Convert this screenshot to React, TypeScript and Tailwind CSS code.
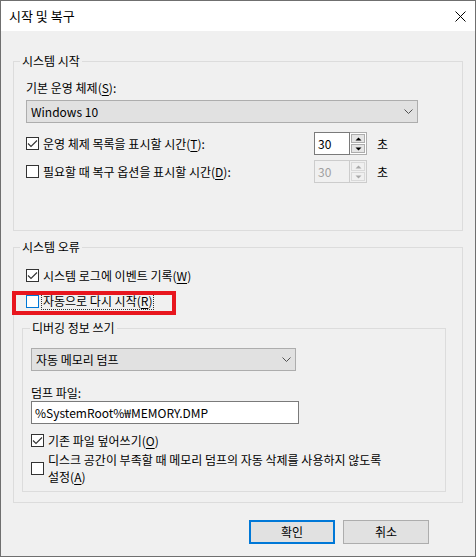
import React from "react";

// Windows 10 "시작 및 복구" dialog

function Mn({ k }: { k: string }) {
  return (
    <>
      (<span className="underline underline-offset-2">{k}</span>)
    </>
  );
}

function CheckBox({ checked, focus }: { checked?: boolean; focus?: boolean }) {
  return (
    <span
      className={
        focus
          ? "flex h-[13px] w-[13px] shrink-0 items-center justify-center border border-[#0078d7] bg-white"
          : "flex h-[13px] w-[13px] shrink-0 items-center justify-center border border-[#333333] bg-white"
      }
    >
      {checked && (
        <svg width="11" height="11" viewBox="0 0 11 11">
          <path d="M1 5.5 L4 8.5 L10 2.5" stroke="#333333" strokeWidth="1.1" fill="none" />
        </svg>
      )}
    </span>
  );
}

function Arrow({ up, color }: { up?: boolean; color: string }) {
  return (
    <svg width="7" height="4" viewBox="0 0 7 4">
      <path d={up ? "M0.5 3.5 L3.5 0.5 L6.5 3.5 Z" : "M0.5 0.5 L3.5 3.5 L6.5 0.5 Z"} fill={color} />
    </svg>
  );
}

function SpinBox({ disabled }: { disabled?: boolean }) {
  const arrow = disabled ? "#a8a8a8" : "#000000";
  return (
    <div className="flex h-[23px]">
      <div
        className={
          disabled
            ? "flex w-[36px] items-center border border-[#cccccc] bg-[#f0f0f0] pl-[3px] text-[#a0a0a0]"
            : "flex w-[36px] items-center border border-[#7a7a7a] bg-white pl-[3px] text-black"
        }
      >
        30
      </div>
      <div
        className={
          disabled
            ? "flex w-[17px] flex-col gap-[1px] border-y border-r border-[#cccccc] bg-[#f0f0f0] p-[1px]"
            : "flex w-[17px] flex-col gap-[1px] border-y border-r border-[#adadad] bg-white p-[1px]"
        }
      >
        <div
          className={
            disabled
              ? "flex flex-1 items-center justify-center border border-[#d9d9d9] bg-[#f0f0f0]"
              : "flex flex-1 items-center justify-center border border-[#adadad] bg-[#e5e5e5]"
          }
        >
          <Arrow up color={arrow} />
        </div>
        <div
          className={
            disabled
              ? "flex flex-1 items-center justify-center border border-[#d9d9d9] bg-[#f0f0f0]"
              : "flex flex-1 items-center justify-center border border-[#adadad] bg-[#e5e5e5]"
          }
        >
          <Arrow color={arrow} />
        </div>
      </div>
    </div>
  );
}

function Chevron() {
  return (
    <svg width="9" height="5" viewBox="0 0 9 5">
      <path d="M0.5 0.5 L4.5 4.5 L8.5 0.5" stroke="#505050" strokeWidth="1" fill="none" />
    </svg>
  );
}

export default function App() {
  return (
    <div className="flex h-[557px] w-[476px] flex-col border border-[#6f6f6f] bg-[#f0f0f0] font-['Noto_Sans_CJK_KR','Noto_Sans',sans-serif] text-[12px] leading-[16px] text-black">
      {/* title bar */}
      <div className="flex h-[30px] items-center justify-between bg-white pl-[8px] pr-[8px]">
        <span className="text-[13px]">시작 및 복구</span>
        <svg width="11" height="11" viewBox="0 0 11 11" className="mr-[1px]">
          <path d="M0.5 0.5 L10.5 10.5 M10.5 0.5 L0.5 10.5" stroke="#000" strokeWidth="1" />
        </svg>
      </div>

      <div className="flex flex-col pl-[12px]">
        {/* 시스템 시작 */}
        <fieldset className="mt-[22px] w-[450px] border border-[#dcdcdc] pb-[47px] pl-[12px]">
          <legend className="-ml-[6px] px-[2px]">시스템 시작</legend>
          <div className="pt-[11px]">
            기본 운영 체제<Mn k="S" />:
          </div>
          <div className="mt-[4px] flex h-[23px] w-[392px] items-center justify-between border border-[#adadad] bg-[#e1e1e1] pl-[4px] pr-[4px]">
            <span>Windows 10</span>
            <Chevron />
          </div>
          <div className="mt-[9px] flex items-center">
            <div className="flex w-[288px] items-center gap-[4px]">
              <CheckBox checked />
              <span>
                운영 체제 목록을 표시할 시간<Mn k="T" />:
              </span>
            </div>
            <SpinBox />
            <span className="ml-[10px]">초</span>
          </div>
          <div className="mt-[5px] flex items-center">
            <div className="flex w-[288px] items-center gap-[4px]">
              <CheckBox />
              <span>
                필요할 때 복구 옵션을 표시할 시간<Mn k="D" />:
              </span>
            </div>
            <SpinBox disabled />
            <span className="ml-[10px]">초</span>
          </div>
        </fieldset>

        {/* 시스템 오류 */}
        <fieldset className="mt-[8px] w-[450px] border border-[#dcdcdc] pb-[10px] pl-[12px]">
          <legend className="-ml-[6px] px-[2px]">시스템 오류</legend>
          <div className="mt-[12px] flex h-[17px] items-center gap-[4px]">
            <CheckBox checked />
            <span>
              시스템 로그에 이벤트 기록<Mn k="W" />
            </span>
          </div>
          <div className="relative mt-[8px] flex h-[18px] items-center">
            <CheckBox focus />
            <span className="ml-[2px] flex h-[18px] items-center border border-dotted border-[#333333] px-[1px]">
              자동으로 다시 시작<Mn k="R" />
            </span>
            <div className="absolute -left-[14px] -top-[1px] h-[24px] w-[164px] border-4 border-[#e8161e]" />
          </div>

          {/* 디버깅 정보 쓰기 */}
          <fieldset className="-ml-[4px] mt-[10px] w-[424px] border border-[#dcdcdc] pb-[6px] pl-[8px]">
            <legend className="-ml-[1px] px-[2px]">디버깅 정보 쓰기</legend>
            <div className="mt-[12px] flex h-[23px] w-[265px] items-center justify-between border border-[#adadad] bg-[#e1e1e1] pl-[4px] pr-[4px]">
              <span>자동 메모리 덤프</span>
              <Chevron />
            </div>
            <div className="mt-[14px]">덤프 파일:</div>
            <div className="flex h-[23px] w-[268px] items-center border border-[#7a7a7a] bg-white pl-[3px]">
              %SystemRoot%₩MEMORY.DMP
            </div>
            <div className="mt-[8px] flex h-[17px] items-center gap-[4px]">
              <CheckBox checked />
              <span>
                기존 파일 덮어쓰기<Mn k="O" />
              </span>
            </div>
            <div className="mt-[2px] flex items-center gap-[4px]">
              <CheckBox />
              <span className="leading-[17px]">
                디스크 공간이 부족할 때 메모리 덤프의 자동 삭제를 사용하지 않도록
                <br />
                설정<Mn k="A" />
              </span>
            </div>
          </fieldset>
        </fieldset>
      </div>

      {/* buttons */}
      <div className="mt-[17px] flex justify-end gap-[8px] pr-[46px]">
        <button className="flex h-[24px] w-[86px] items-center justify-center border-2 border-[#0078d7] bg-[#e1e1e1]">
          확인
        </button>
        <button className="flex h-[24px] w-[86px] items-center justify-center border border-[#adadad] bg-[#e1e1e1]">
          취소
        </button>
      </div>
    </div>
  );
}
